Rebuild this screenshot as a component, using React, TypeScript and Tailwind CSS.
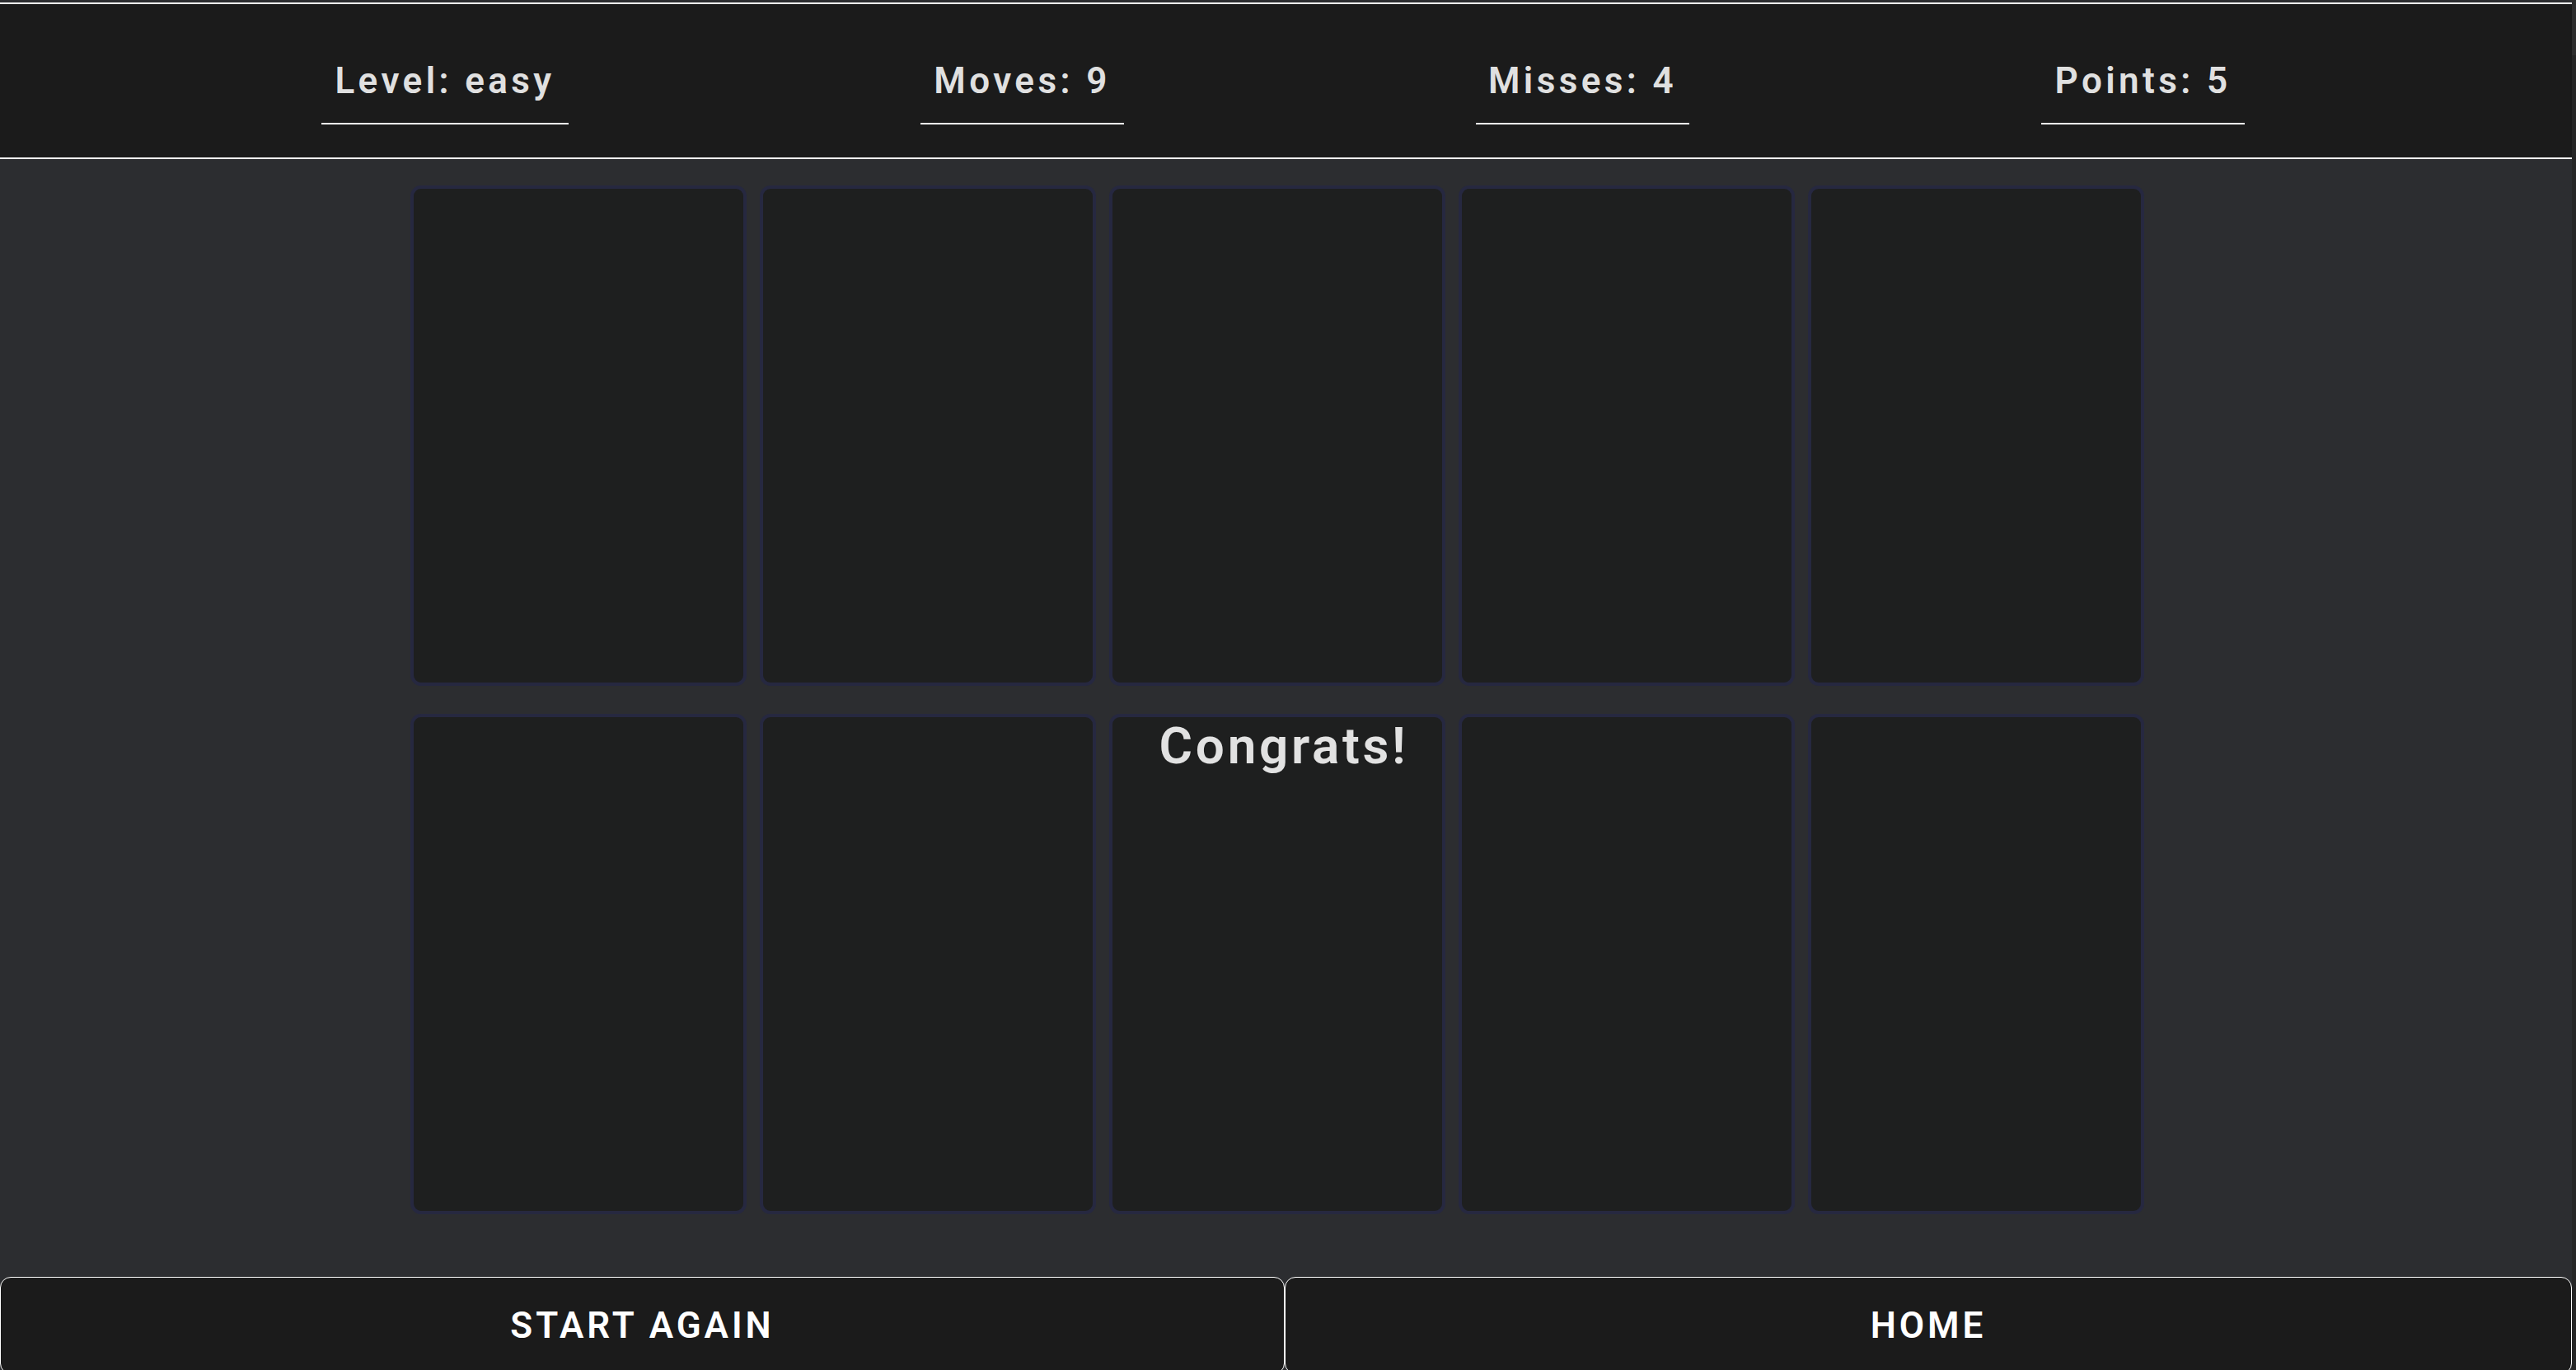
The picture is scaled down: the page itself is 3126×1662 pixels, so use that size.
export default function App() {
  const stats = [
    { label: "Level: easy", w: "w-[300px]" },
    { label: "Moves: 9", w: "w-[247px]" },
    { label: "Misses: 4", w: "w-[259px]" },
    { label: "Points: 5", w: "w-[247px]" },
  ];
  const cards = Array.from({ length: 10 }, (_, i) => i);
  return (
    <div className="relative flex h-[1662px] w-[3126px] overflow-hidden bg-[#2c2d30] font-['Roboto',sans-serif]">
      <div className="flex w-[3121px] shrink-0 flex-col">
        <header className="mt-[3px] flex shrink-0 justify-center gap-[427px] border-y-2 border-white bg-[#1b1b1b] pt-[67px] pr-[7px] pb-[40px]">
          {stats.map((s) => (
            <div
              key={s.label}
              className={`${s.w} border-b-2 border-white pb-[25px] text-center text-[44px] leading-[52px] font-semibold tracking-[0.1em] text-[#e0e0e0]`}
            >
              {s.label}
            </div>
          ))}
        </header>
        <main className="flex shrink-0 justify-center pt-[32px] pr-[21px]">
          <div className="grid grid-cols-5 gap-x-[16px] gap-y-[34px]">
            {cards.map((c) => (
              <div
                key={c}
                className="h-[607px] w-[408px] rounded-[13px] border-4 border-[#262840] bg-[#1e1f1f]"
              />
            ))}
          </div>
        </main>
        <div className="mt-[76px] flex h-[118px] shrink-0">
          <button className="flex w-[1559px] shrink-0 items-center justify-center rounded-[13px] border-[1.5px] border-white bg-[#1b1b1b] text-[44px] font-semibold tracking-[0.09em] text-white">
            START AGAIN
          </button>
          <button className="flex flex-1 items-center justify-center rounded-[13px] border-[1.5px] border-white bg-[#1b1b1b] text-[44px] font-semibold tracking-[0.09em] text-white">
            HOME
          </button>
        </div>
      </div>
      <div className="w-[5px] shrink-0 bg-[#262626]">
        <div className="h-[67px] bg-[#2e2e2e]" />
      </div>
      <div className="absolute top-[874px] left-[1558px] -translate-x-1/2 text-[62px] leading-[62px] font-semibold tracking-[0.06em] whitespace-nowrap text-[#e2e2e2]">
        Congrats!
      </div>
    </div>
  );
}
